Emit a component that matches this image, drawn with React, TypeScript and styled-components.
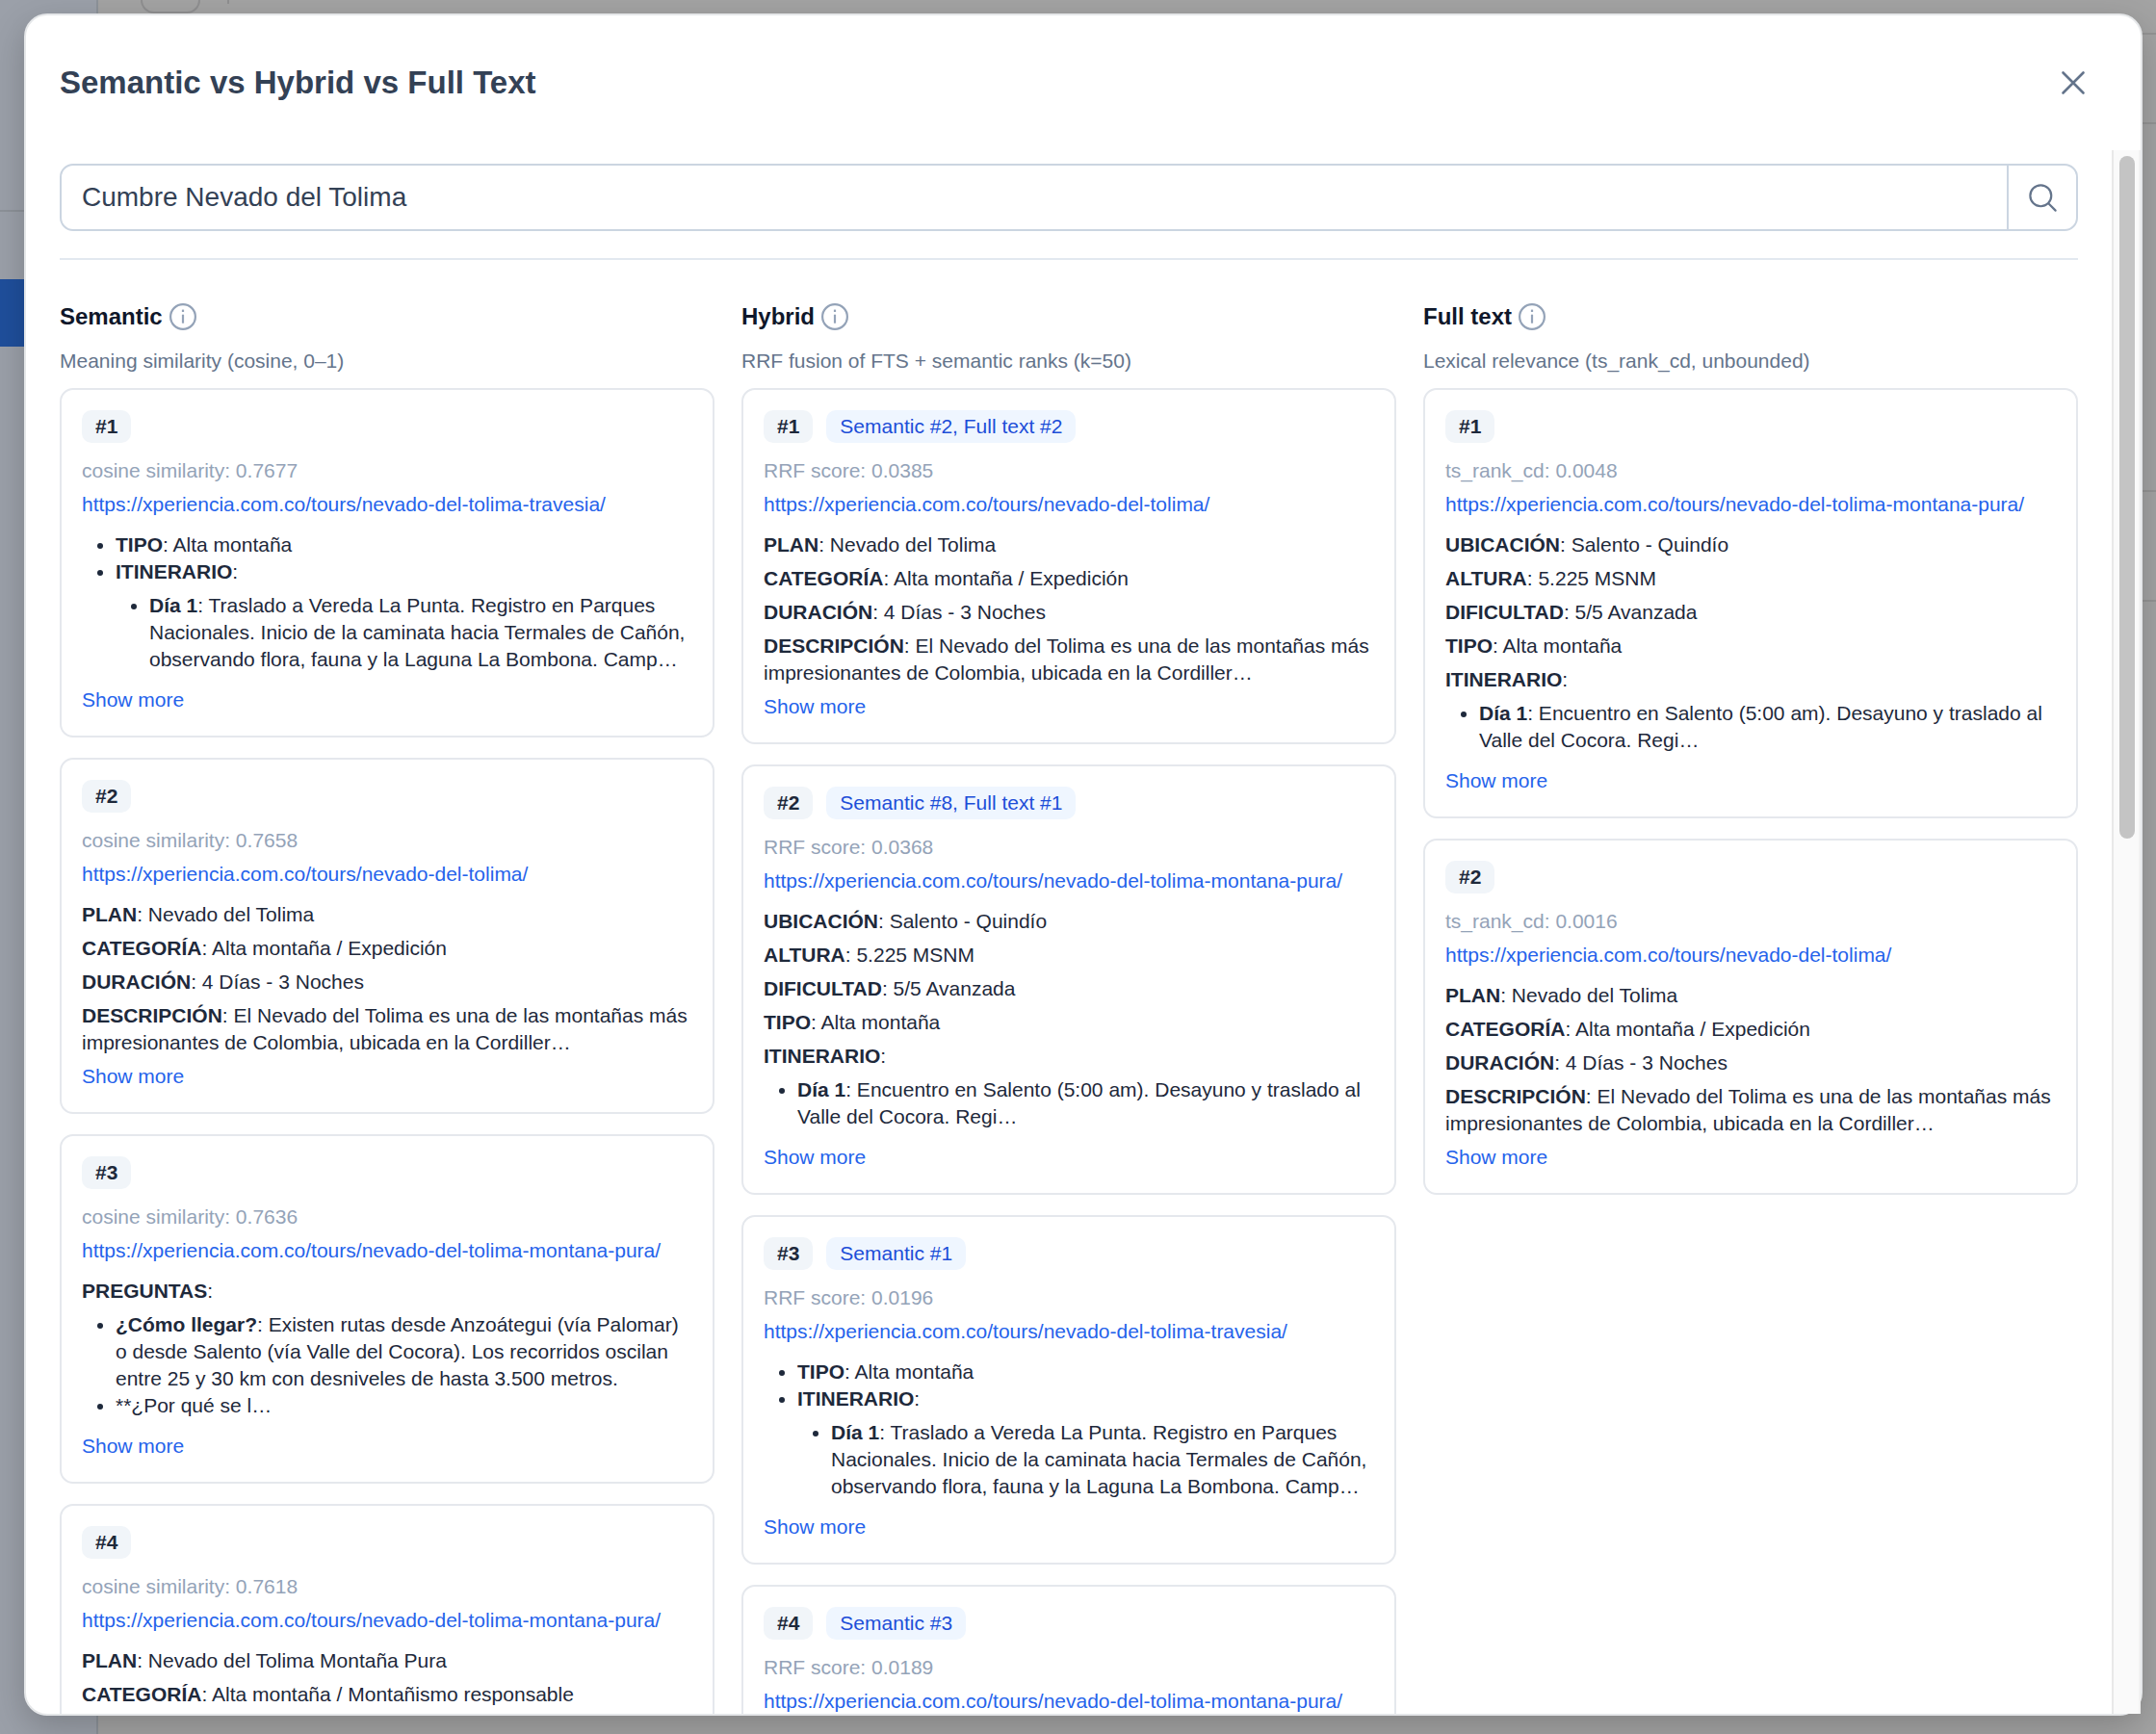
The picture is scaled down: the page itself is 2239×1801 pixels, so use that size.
import React from "react";
import styled, { createGlobalStyle } from "styled-components";

const Global = createGlobalStyle`
  *, *::before, *::after { box-sizing: border-box; }
  body {
    margin: 0;
    font-family: "Liberation Sans", Arial, sans-serif;
    font-size: 21px;
    line-height: 28px;
    color: #1e293b;
    background: #a3a3a3;
  }
  button, input { font: inherit; color: inherit; }
  h1, h2, p, ul { margin: 0; padding: 0; }
`;

const Page = styled.div`
  position: relative;
  height: 100vh;
  overflow: hidden;
  display: flex;
`;

const Backdrop = styled.div`
  position: absolute;
  inset: 0;
  display: flex;
  flex-direction: column;
`;

const BackdropRow = styled.div<{ $h: number }>`
  display: flex;
  flex: 0 0 ${(p) => p.$h}px;
  border-bottom: 2px solid #949494;
`;

const Sidebar = styled.div`
  position: absolute;
  top: 0;
  bottom: 0;
  left: 0;
  width: 102px;
  padding-top: 218px;
  background: #9ba0a9;
  border-right: 2px solid #8d9299;
`;

const SidebarRule = styled.div`
  height: 72px;
  border-top: 2px solid #8d9299;
`;

const SidebarActive = styled.div`
  height: 70px;
  background: #1f4f9c;
`;

const ToolbarStub = styled.div`
  height: 14px;
  margin-left: 146px;
  display: flex;
  gap: 28px;
`;

const StubButton = styled.div`
  flex: 0 0 62px;
  height: 14px;
  border: 2px solid #8f8f90;
  border-top: 0;
  border-radius: 0 0 14px 14px;
`;

const StubTick = styled.div`
  flex: 0 0 2px;
  height: 4px;
  background: #8f8f90;
`;

const Overlay = styled.div`
  position: relative;
  flex: 1;
  min-width: 0;
  display: flex;
  padding: 14px 14px 19px 25px;
`;

const Dialog = styled.section`
  flex: 1;
  min-width: 0;
  display: flex;
  flex-direction: column;
  background: #fff;
  border: 2px solid #e5e7e9;
  border-radius: 24px;
  box-shadow: 0 12px 36px rgba(0, 0, 0, 0.2);
`;

const Header = styled.header`
  flex: 0 0 140px;
  display: flex;
  align-items: center;
  justify-content: space-between;
  padding: 0 49px 0 35px;
`;

const Title = styled.h1`
  font-size: 33px;
  line-height: 48px;
  font-weight: 700;
  color: #334155;
`;

const IconButton = styled.button`
  display: flex;
  align-items: center;
  justify-content: center;
  padding: 0;
  border: 0;
  background: none;
  color: #64748b;
  cursor: pointer;
`;

const Body = styled.div`
  flex: 1;
  min-height: 0;
  display: flex;
`;

const Content = styled.div`
  flex: 1;
  min-width: 0;
  overflow-y: auto;
  scrollbar-width: none;
  padding: 14px 35px 0;
`;

const Track = styled.div`
  flex: 0 0 30px;
  padding: 6px 4px 6px 6px;
  background: #fafafa;
  border-left: 2px solid #e8e8e8;
  border-right: 2px solid #f2f2f2;
`;

const Thumb = styled.div`
  width: 16px;
  height: 44%;
  border-radius: 8px;
  background: #c4c4c4;
`;

const SearchForm = styled.form`
  display: flex;
  height: 70px;
  border: 2px solid #cbd5e1;
  border-radius: 14px;
`;

const SearchInput = styled.input`
  flex: 1;
  min-width: 0;
  padding: 0 21px;
  border: 0;
  outline: 0;
  background: none;
  font-size: 28px;
  color: #334155;
`;

const SearchButton = styled(IconButton)`
  flex: 0 0 72px;
  border-left: 2px solid #cbd5e1;
`;

const Columns = styled.div`
  display: grid;
  grid-template-columns: repeat(3, minmax(0, 1fr));
  gap: 28px;
  margin-top: 28px;
  padding-top: 42px;
  border-top: 2px solid #e2e8f0;
`;

const Column = styled.section`
  display: flex;
  flex-direction: column;
`;

const ColumnHead = styled.div`
  display: flex;
  align-items: center;
  gap: 7px;
  height: 34px;
`;

const ColumnTitle = styled.h2`
  font-size: 24px;
  line-height: 34px;
  font-weight: 700;
  color: #0f172a;
`;

const ColumnNote = styled.p`
  margin: 15px 0 14px;
  color: #64748b;
`;

const Cards = styled.div`
  display: flex;
  flex-direction: column;
  gap: 21px;
`;

const CardBox = styled.article`
  padding: 21px;
  border: 2px solid #e5e8ed;
  border-radius: 14px;
`;

const Badges = styled.div`
  display: flex;
  gap: 14px;
`;

const Badge = styled.span<{ $tone: "rank" | "source" }>`
  padding: 0 14px;
  line-height: 34px;
  border-radius: 10px;
  font-weight: ${(p) => (p.$tone === "rank" ? 700 : 400)};
  color: ${(p) => (p.$tone === "rank" ? "#1e293b" : "#1d4ed8")};
  background: ${(p) => (p.$tone === "rank" ? "#f1f5f9" : "#eff6ff")};
`;

const Score = styled.p`
  margin-top: 15px;
  color: #94a3b8;
`;

const SourceLink = styled.a`
  display: block;
  margin: 7px 0 14px;
  color: #2563eb;
  text-decoration: none;
`;

const Line = styled.p`
  margin-bottom: 7px;
`;

const List = styled.ul<{ $nested?: boolean }>`
  list-style: disc;
  padding-left: 35px;
  margin: ${(p) => (p.$nested ? "7px 0 0" : "0 0 14px")};
`;

const MoreButton = styled.button`
  display: block;
  height: 30px;
  padding: 0 0 2px;
  border: 0;
  background: none;
  line-height: 28px;
  color: #2563eb;
  cursor: pointer;
`;

const CloseIcon = () => (
  <svg width="42" height="42" viewBox="0 0 24 24" fill="none" stroke="currentColor" strokeWidth="1.5" strokeLinecap="round" strokeLinejoin="round" aria-hidden="true">
    <path d="M6 18 18 6M6 6l12 12" />
  </svg>
);

const SearchIcon = () => (
  <svg width="35" height="35" viewBox="0 0 24 24" fill="none" stroke="currentColor" strokeWidth="1.5" strokeLinecap="round" strokeLinejoin="round" aria-hidden="true">
    <path d="m21 21-5.197-5.197m0 0A7.5 7.5 0 1 0 5.196 5.196a7.5 7.5 0 0 0 10.607 10.607Z" />
  </svg>
);

const InfoIcon = () => (
  <svg width="28" height="28" viewBox="0 0 28 28" fill="none" stroke="#94a3b8" strokeWidth="2.2" aria-hidden="true">
    <circle cx="14" cy="14" r="12.9" />
    <path d="M14 11.7v9" />
    <path d="M14 6.6v2.4" />
  </svg>
);

type Block =
  | { kind: "line"; label: string; text?: string }
  | { kind: "list"; items: Item[] };
type Item = { label?: string; text?: string; children?: Item[] };
type Result = { score: string; slug: string; source?: string; blocks: Block[]; more?: boolean };

const line = (label: string, text?: string): Block => ({ kind: "line", label, text });

const travesia: Block[] = [
  {
    kind: "list",
    items: [
      { label: "TIPO", text: "Alta montaña" },
      {
        label: "ITINERARIO",
        children: [
          {
            label: "Día 1",
            text: "Traslado a Vereda La Punta. Registro en Parques Nacionales. Inicio de la caminata hacia Termales de Cañón, observando flora, fauna y la Laguna La Bombona. Camp…",
          },
        ],
      },
    ],
  },
];

const tolima: Block[] = [
  line("PLAN", "Nevado del Tolima"),
  line("CATEGORÍA", "Alta montaña / Expedición"),
  line("DURACIÓN", "4 Días - 3 Noches"),
  line(
    "DESCRIPCIÓN",
    "El Nevado del Tolima es una de las montañas más impresionantes de Colombia, ubicada en la Cordiller…"
  ),
];

const montanaPura: Block[] = [
  line("UBICACIÓN", "Salento - Quindío"),
  line("ALTURA", "5.225 MSNM"),
  line("DIFICULTAD", "5/5 Avanzada"),
  line("TIPO", "Alta montaña"),
  line("ITINERARIO"),
  {
    kind: "list",
    items: [
      { label: "Día 1", text: "Encuentro en Salento (5:00 am). Desayuno y traslado al Valle del Cocora. Regi…" },
    ],
  },
];

const preguntas: Block[] = [
  line("PREGUNTAS"),
  {
    kind: "list",
    items: [
      {
        label: "¿Cómo llegar?",
        text: "Existen rutas desde Anzoátegui (vía Palomar) o desde Salento (vía Valle del Cocora). Los recorridos oscilan entre 25 y 30 km con desniveles de hasta 3.500 metros.",
      },
      { text: "**¿Por qué se l…" },
    ],
  },
];

const columns: { title: string; note: string; results: Result[] }[] = [
  {
    title: "Semantic",
    note: "Meaning similarity (cosine, 0–1)",
    results: [
      { score: "cosine similarity: 0.7677", slug: "nevado-del-tolima-travesia", blocks: travesia, more: true },
      { score: "cosine similarity: 0.7658", slug: "nevado-del-tolima", blocks: tolima, more: true },
      { score: "cosine similarity: 0.7636", slug: "nevado-del-tolima-montana-pura", blocks: preguntas, more: true },
      {
        score: "cosine similarity: 0.7618",
        slug: "nevado-del-tolima-montana-pura",
        blocks: [
          line("PLAN", "Nevado del Tolima Montaña Pura"),
          line("CATEGORÍA", "Alta montaña / Montañismo responsable"),
        ],
      },
    ],
  },
  {
    title: "Hybrid",
    note: "RRF fusion of FTS + semantic ranks (k=50)",
    results: [
      { score: "RRF score: 0.0385", slug: "nevado-del-tolima", source: "Semantic #2, Full text #2", blocks: tolima, more: true },
      { score: "RRF score: 0.0368", slug: "nevado-del-tolima-montana-pura", source: "Semantic #8, Full text #1", blocks: montanaPura, more: true },
      { score: "RRF score: 0.0196", slug: "nevado-del-tolima-travesia", source: "Semantic #1", blocks: travesia, more: true },
      { score: "RRF score: 0.0189", slug: "nevado-del-tolima-montana-pura", source: "Semantic #3", blocks: [] },
    ],
  },
  {
    title: "Full text",
    note: "Lexical relevance (ts_rank_cd, unbounded)",
    results: [
      { score: "ts_rank_cd: 0.0048", slug: "nevado-del-tolima-montana-pura", blocks: montanaPura, more: true },
      { score: "ts_rank_cd: 0.0016", slug: "nevado-del-tolima", blocks: tolima, more: true },
    ],
  },
];

const Labelled = ({ label, text = "" }: { label?: string; text?: string }) =>
  label ? (
    <>
      <strong>{label}</strong>
      {`: ${text}`}
    </>
  ) : (
    <>{text}</>
  );

const Items = ({ items, nested }: { items: Item[]; nested?: boolean }) => (
  <List $nested={nested}>
    {items.map((it, i) => (
      <li key={i}>
        <Labelled label={it.label} text={it.text} />
        {it.children && <Items items={it.children} nested />}
      </li>
    ))}
  </List>
);

const Card = ({ rank, result }: { rank: number; result: Result }) => {
  const url = `https://xperiencia.com.co/tours/${result.slug}/`;
  return (
    <CardBox>
      <Badges>
        <Badge $tone="rank">{`#${rank}`}</Badge>
        {result.source && <Badge $tone="source">{result.source}</Badge>}
      </Badges>
      <Score>{result.score}</Score>
      <SourceLink href={url}>{url}</SourceLink>
      {result.blocks.map((b, i) =>
        b.kind === "line" ? (
          <Line key={i}>
            <Labelled label={b.label} text={b.text} />
          </Line>
        ) : (
          <Items key={i} items={b.items} />
        )
      )}
      {result.more && <MoreButton type="button">Show more</MoreButton>}
    </CardBox>
  );
};

export default function App() {
  return (
    <Page>
      <Global />
      <Backdrop>
        <BackdropRow $h={36}>
          <ToolbarStub>
            <StubButton />
            <StubTick />
          </ToolbarStub>
        </BackdropRow>
        <BackdropRow $h={93} />
        <BackdropRow $h={382} />
        <BackdropRow $h={114} />
        <Sidebar>
          <SidebarRule />
          <SidebarActive />
        </Sidebar>
      </Backdrop>
      <Overlay>
        <Dialog role="dialog" aria-labelledby="dialog-title">
          <Header>
            <Title id="dialog-title">Semantic vs Hybrid vs Full Text</Title>
            <IconButton type="button" aria-label="Close">
              <CloseIcon />
            </IconButton>
          </Header>
          <Body>
            <Content>
              <SearchForm onSubmit={(e) => e.preventDefault()}>
                <SearchInput type="text" aria-label="Search query" defaultValue="Cumbre Nevado del Tolima" />
                <SearchButton type="submit" aria-label="Search">
                  <SearchIcon />
                </SearchButton>
              </SearchForm>
              <Columns>
                {columns.map((c) => (
                  <Column key={c.title}>
                    <ColumnHead>
                      <ColumnTitle>{c.title}</ColumnTitle>
                      <IconButton type="button" aria-label={`About ${c.title}`}>
                        <InfoIcon />
                      </IconButton>
                    </ColumnHead>
                    <ColumnNote>{c.note}</ColumnNote>
                    <Cards>
                      {c.results.map((r, i) => (
                        <Card key={i} rank={i + 1} result={r} />
                      ))}
                    </Cards>
                  </Column>
                ))}
              </Columns>
            </Content>
            <Track aria-hidden="true">
              <Thumb />
            </Track>
          </Body>
        </Dialog>
      </Overlay>
    </Page>
  );
}
